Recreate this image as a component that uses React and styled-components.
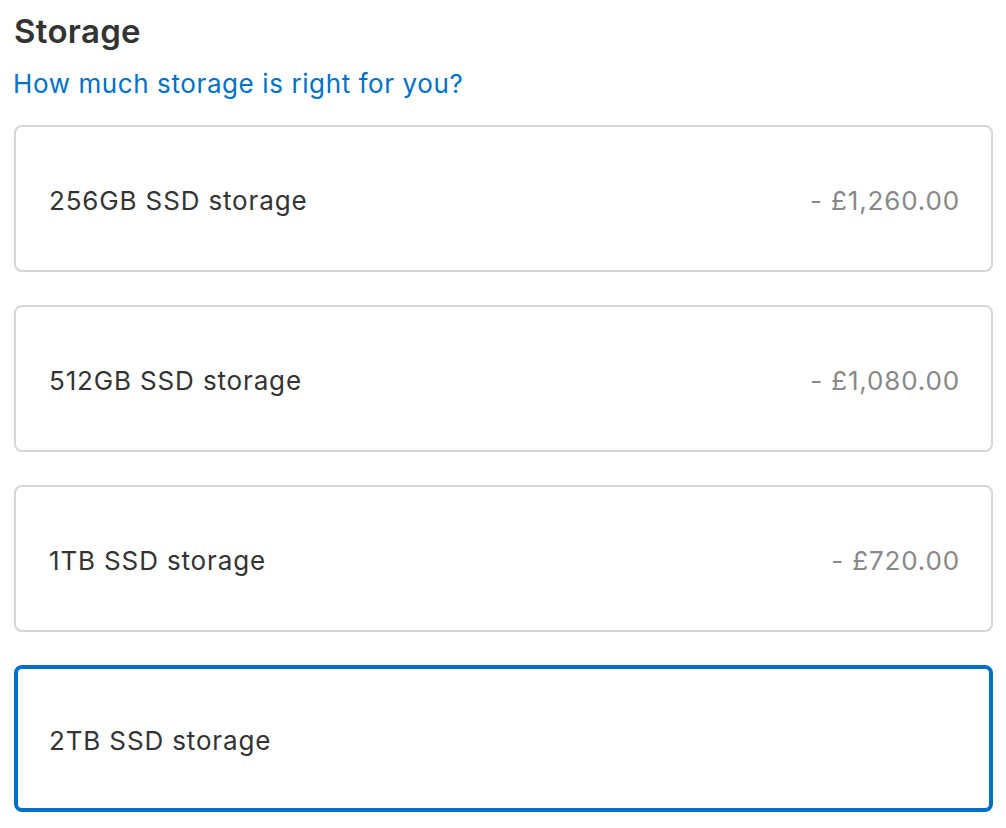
import styled, { createGlobalStyle } from "styled-components";

const GlobalStyle = createGlobalStyle`
  body {
    margin: 0;
    background: #fff;
    font-family: "Inter", "Open Sans", "Liberation Sans", sans-serif;
    color: #333;
  }
`;

const Page = styled.div`
  width: 979px;
  padding: 10px 0 0 14px;
`;

const Title = styled.h2`
  margin: 0;
  font-size: 33px;
  line-height: 42px;
  font-weight: 600;
  color: #333;
  letter-spacing: 0.3px;
`;

const HelpLink = styled.a`
  display: inline-block;
  margin: 15px 0 0 -1px;
  font-size: 26px;
  line-height: 34px;
  letter-spacing: 0.6px;
  color: #0070c9;
  text-decoration: none;
  cursor: pointer;
`;

const Options = styled.div`
  display: flex;
  flex-direction: column;
  gap: 33px;
  margin-top: 24px;
`;

const Option = styled.div`
  box-sizing: border-box;
  height: 147px;
  display: flex;
  align-items: center;
  justify-content: space-between;
  padding: 4px ${(p) => (p.$selected ? 29 : 31)}px 0 ${(p) => (p.$selected ? 31 : 33)}px;
  border: ${(p) => (p.$selected ? "4px solid #0070c9" : "2px solid #d6d6d6")};
  border-radius: 8px;
  background: #fff;
  cursor: pointer;
`;

const Label = styled.span`
  font-size: 26px;
  letter-spacing: 0.85px;
  color: #333;
`;

const Price = styled.span`
  font-size: 26px;
  letter-spacing: 0.85px;
  color: #888;
`;

const options = [
  { label: "256GB SSD storage", price: "- £1,260.00" },
  { label: "512GB SSD storage", price: "- £1,080.00" },
  { label: "1TB SSD storage", price: "- £720.00" },
  { label: "2TB SSD storage", price: "", selected: true },
];

const App = () => {
  return (
    <>
      <GlobalStyle />
      <Page>
        <Title>Storage</Title>
        <HelpLink>How much storage is right for you?</HelpLink>
        <Options>
          {options.map((o) => (
            <Option key={o.label} $selected={o.selected}>
              <Label>{o.label}</Label>
              {o.price && <Price>{o.price}</Price>}
            </Option>
          ))}
        </Options>
      </Page>
    </>
  );
};

export default App;
